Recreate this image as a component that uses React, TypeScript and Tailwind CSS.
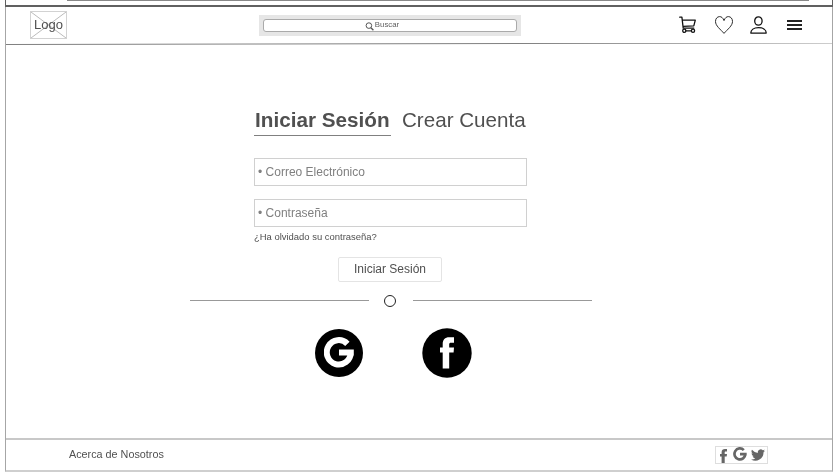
import React from "react";

function CartIcon() {
  return (
    <svg className="h-[18px] w-[18px] shrink-0" viewBox="0 0 18 18" fill="none" stroke="#111" strokeWidth="1.3" strokeLinejoin="round" strokeLinecap="round">
      <path d="M.7 1.2h2.2l1.3 10.900h10.600M3.600 4.200h12.700l-1.500 5.600-10.700.6" />
      <circle cx="5.3" cy="14.800" r="1.600" />
      <circle cx="14" cy="14.800" r="1.600" />
      <path d="M6.900 14.800h5.500" />
    </svg>
  );
}

function HeartIcon() {
  return (
    <svg className="h-[18px] w-[18px] shrink-0" viewBox="0 0 18 18" fill="none" stroke="#222" strokeWidth="0.95">
      <path d="M9 4.6C7.9 1.6 6.3.6 4.6.6 2.2.6.5 2.7.5 5.4c0 4.500 4.900 7.800 8.500 12C12.600 13.200 17.500 9.900 17.500 5.400 17.500 2.700 15.800.6 13.400.6 11.700.6 10.100 1.600 9 4.600z" />
    </svg>
  );
}

function UserIcon() {
  return (
    <svg className="h-[18px] w-[17px] shrink-0" viewBox="0 0 17 18" fill="none" stroke="#111" strokeWidth="1.3" strokeLinejoin="round">
      <ellipse cx="8.400" cy="5" rx="3.700" ry="4.200" />
      <path d="M.8 17.100c0-3.200 2.900-5.500 7.700-5.500s7.700 2.300 7.700 5.500z" />
    </svg>
  );
}

function GoogleGlyph({ className }: { className: string }) {
  return (
    <svg className={className} viewBox="0 0 30 31" fill="none" stroke="currentColor" strokeWidth="6">
      <path d="M23.400 6.800A12 12.200 0 1 0 26.800 15.600M15 15.600H29.800" />
    </svg>
  );
}

function Header() {
  return (
    <header className="flex h-9 items-start pt-[4px]">
      <div className="relative ml-6 flex h-[28px] w-[37px] items-center justify-center border border-[#d2d2d2]">
        <svg className="absolute inset-0 h-full w-full" viewBox="0 0 35 26" preserveAspectRatio="none" stroke="#aaa" strokeWidth="0.8">
          <path d="M0 0L35 26M35 0L0 26" />
        </svg>
        <span className="relative mb-[2px] text-[13px] leading-none text-[#505050]">Logo</span>
      </div>
      <div className="mt-[4px] ml-[192px] flex h-[21px] w-[262px] items-center justify-center bg-[#e6e6e6]">
        <div className="flex h-[13px] w-[254px] items-center justify-center rounded-[3px] border border-[#aaa] bg-white pr-[16px]">
          <svg className="mt-[1px] mr-[1px] h-[9px] w-[9px]" viewBox="0 0 9 9" fill="none" stroke="#555">
            <circle cx="3.900" cy="3.600" r="2.800" />
            <path d="M5.900 5.700l2.500 2.500" strokeWidth="1.300" />
          </svg>
          <span className="mb-[2px] text-[7.800px] leading-none text-[#606060]">Buscar</span>
        </div>
      </div>
      <nav className="mt-[5px] ml-[158px] flex items-start">
        <CartIcon />
        <div className="ml-[18px]"><HeartIcon /></div>
        <div className="ml-[17px]"><UserIcon /></div>
        <div className="mt-[4px] ml-[20px] flex w-[15px] flex-col gap-[2px]">
          <i className="h-[2px] bg-[#222]" />
          <i className="h-[2px] bg-[#222]" />
          <i className="h-[2px] bg-[#222]" />
        </div>
      </nav>
    </header>
  );
}

function Field({ label }: { label: string }) {
  return (
    <div className="flex h-[28px] w-[273px] items-center border border-[#d0d0d0] pl-[3px] text-[12px] leading-none text-[#808080]">
      <span>• {label}</span>
    </div>
  );
}

function LoginForm() {
  return (
    <main className="flex h-[394px] flex-col pt-[63px]">
      <div className="ml-[248px] flex text-[20.700px] leading-[24px] text-[#505050]">
        <h1 className="w-[137px] border-b border-[#808080] pb-[3px] pl-[1px] font-bold whitespace-nowrap">Iniciar Sesión</h1>
        <h2 className="ml-[11px] text-[20.600px] whitespace-nowrap">Crear Cuenta</h2>
      </div>
      <div className="mt-[22px] ml-[248px] flex flex-col gap-[13px]">
        <Field label="Correo Electrónico" />
        <Field label="Contraseña" />
      </div>
      <a className="mt-[4px] ml-[248px] text-[9.450px] leading-[11px] text-[#505050]">¿Ha olvidado su contraseña?</a>
      <button className="mt-[15px] ml-[332px] h-[25px] w-[104px] rounded-[2px] border border-[#e4e4e4] text-[12px] leading-none text-[#505050]">Iniciar Sesión</button>
      <div className="mt-[13px] ml-[184px] flex items-center">
        <i className="h-px w-[179px] bg-[#999]" />
        <i className="mr-[17px] ml-[15px] h-[12px] w-[12px] rounded-full border border-[#222]" />
        <i className="h-px w-[179px] bg-[#999]" />
      </div>
      <div className="mt-[21px] ml-[309px] flex items-start">
        <div className="mt-[1px] flex h-[48px] w-[48px] items-center justify-center rounded-full bg-black text-white">
          <GoogleGlyph className="h-[31px] w-[30px]" />
        </div>
        <svg className="ml-[59px] h-[50px] w-[50px]" viewBox="0 0 50 50">
          <circle cx="25" cy="25" r="24.700" fill="#000" />
          <path fill="#fff" d="M20.700 40.500V24.500H18v-5h2.700v-3.200c0-4.800 2.300-7 6.500-7H32v5.400h-2.900c-1.500 0-1.900.5-1.900 1.800v3H32l-.4 5h-4.400v16z" />
        </svg>
      </div>
    </main>
  );
}

function Footer() {
  return (
    <footer className="flex h-[32px] items-center border-t-2 border-[#c8c8c8] text-[#505050]">
      <span className="mb-[2px] ml-[63px] w-[646px] text-[10.800px] leading-none">Acerca de Nosotros</span>
      <div className="flex h-[18px] w-[53px] items-center border border-[#dedede] pl-[4px]">
        <svg className="mt-[1px] h-[14px] w-[7px]" viewBox="0 0 7 14" fill="#666">
          <path d="M1.600 14V7.600H0V5h1.600V3.300C1.600 1.100 3 0 5 0H7v2.500H5.700c-.8 0-1 .4-1 1.100V5H7l-.3 2.600H4.700V14z" />
        </svg>
        <GoogleGlyph className="mb-[2px] ml-[6px] h-[14px] w-[14px] text-[#666]" />
        <svg className="ml-[4px] h-[14px] w-[14px]" viewBox="0 0 24 24" fill="#666">
          <path d="M24 4.600a10 10 0 0 1-2.800.8 5 5 0 0 0 2.100-2.700 10 10 0 0 1-3.100 1.200 4.900 4.900 0 0 0-8.400 4.500A14 14 0 0 1 1.700 3.100a4.900 4.900 0 0 0 1.500 6.600 5 5 0 0 1-2.200-.6 4.900 4.900 0 0 0 3.900 4.900 5 5 0 0 1-2.200.1 4.900 4.900 0 0 0 4.600 3.400A10 10 0 0 1 0 19.500a14 14 0 0 0 21.500-12.400A10 10 0 0 0 24 4.600z" />
        </svg>
      </div>
    </footer>
  );
}

export default function App() {
  return (
    <div className="flex h-[474px] w-[837px] flex-col overflow-hidden bg-white pl-[5px] font-['Liberation_Sans',Arial,sans-serif] grayscale">
      <div className="flex h-[7px] w-[828px] items-start border-x border-b-2 border-[#606060]">
        <i className="ml-[61px] h-px w-[742px] bg-[#888]" />
      </div>
      <div className="flex h-[465px] w-[828px] flex-col border-x border-b-2 border-x-[#a6a6a6] border-b-[#cfcfcf]">
        <Header />
        <svg className="-mb-[1px] h-[3px] w-[826px] shrink-0" viewBox="0 0 826 3">
          <path d="M0 1.500L826 -.1" stroke="#808080" fill="none" />
        </svg>
        <LoginForm />
        <Footer />
      </div>
    </div>
  );
}
